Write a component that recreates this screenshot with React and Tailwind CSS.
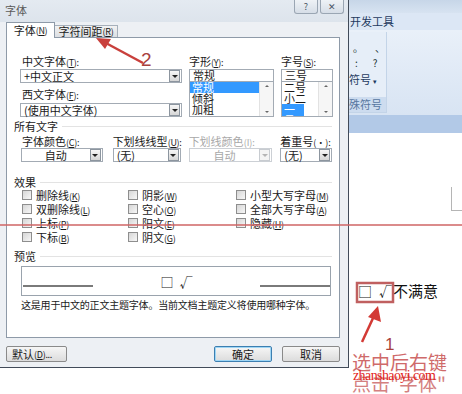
import React from 'react';

const K = ({ k, tail = '' }) => (
  <span className="text-[9px] tracking-[-0.3px]">
    (<u>{k}</u>){tail}
  </span>
);

const DropBtn = ({ disabled }) => (
  <span
    className={`mr-[1px] flex h-[12px] w-[11px] shrink-0 items-center justify-center border ${
      disabled ? 'border-[#c8ccd1] bg-[#f4f4f4]' : 'border-[#8c959f] bg-linear-to-b from-[#f7f7f7] to-[#d6d6d6]'
    }`}
  >
    <span className={`h-0 w-0 border-x-[3px] border-t-[3px] border-x-transparent ${disabled ? 'border-t-[#b5b5b5]' : 'border-t-[#222]'}`} />
  </span>
);

const Combo = ({ text, center, disabled }) => (
  <div className={`flex h-[14px] items-center border bg-white ${disabled ? 'border-[#ccd0d5]' : 'border-[#a3abb4]'}`}>
    <span className={`flex-1 whitespace-nowrap px-[3px] leading-none ${center ? 'text-center' : ''} ${disabled ? 'text-[#a8a8a8]' : 'text-[#1a1a1a]'}`}>
      {text}
    </span>
    <DropBtn disabled={disabled} />
  </div>
);

const Scroll = () => (
  <div className="flex w-[14px] flex-col items-center justify-between border-l border-[#e2e2e2] bg-[#f6f6f6] py-[3px]">
    <span className="h-0 w-0 border-x-[2px] border-b-[2px] border-x-transparent border-b-[#666]" />
    <span className="h-0 w-0 border-x-[2px] border-t-[2px] border-x-transparent border-t-[#666]" />
  </div>
);

const ListPicker = ({ value, items, selected, selectedAtBottom }) => (
  <div className="flex flex-col">
    <div className="flex h-[13px] items-center border border-[#a3abb4] bg-white px-[3px] leading-none">{value}</div>
    <div className="flex h-[35px] border border-t-0 border-[#a3abb4] bg-white">
      <div className="flex flex-1 flex-col overflow-hidden leading-[11px]">
        {items.map((it) => (
          <span key={it} className={`px-[2px] ${it === selected ? 'bg-[#3399ff] text-white' : ''}`}>
            {it}
          </span>
        ))}
        {selectedAtBottom && <span className="mr-[14px] bg-[#3399ff] px-[2px] text-white">一号</span>}
      </div>
      <Scroll />
    </div>
  </div>
);

const Header = ({ children }) => (
  <div className="flex h-[12px] items-center gap-[4px] leading-none text-[#1a1a1a]">
    <span>{children}</span>
    <span className="h-px flex-1 bg-[#e3e3e3]" />
  </div>
);

const Check = ({ label, k }) => (
  <div className="flex h-[14px] items-center gap-[4px] whitespace-nowrap leading-none">
    <span className="h-[10px] w-[10px] shrink-0 border border-[#8e8e8e] bg-linear-to-br from-[#d6d6d6] to-[#f7f7f7]" />
    <span>
      {label}
      <K k={k} />
    </span>
  </div>
);

const Btn = ({ children, active, className }) => (
  <div
    className={`flex h-[16px] items-center justify-center rounded-[2px] border bg-linear-to-b from-[#f6f6f6] to-[#dcdcdc] leading-none ${
      active ? 'border-[#3c7fb1] shadow-[inset_0_0_0_1px_#9fd6f5]' : 'border-[#8a8a8a]'
    } ${className}`}
  >
    {children}
  </div>
);

const Dialog = () => (
  <div className="flex h-[368px] flex-col border-r border-b border-[#414b59] bg-[#edf0f4]">
    <div className="flex h-[22px] items-start justify-between bg-linear-to-b from-[#e4eaf1] to-[#dde4ec]">
      <span className="pl-[5px] pt-[2px] text-[#5a5a5a]">字体</span>
      <div className="mr-[4px] flex gap-[2px]">
        <span className="flex h-[14px] w-[24px] items-center justify-center rounded-b-[3px] border border-t-0 border-[#9aa6b3] bg-linear-to-b from-[#eef2f6] to-[#d6dee7] text-[9px] leading-none text-[#4a5563]">
          ?
        </span>
        <span className="flex h-[14px] w-[24px] items-center justify-center rounded-b-[3px] border border-t-0 border-[#9aa6b3] bg-linear-to-b from-[#eef2f6] to-[#d6dee7] text-[9px] leading-none text-[#4a5563]">
          ✕
        </span>
      </div>
    </div>

    <div className="flex flex-1 flex-col pl-[6px] pr-[8px]">
      <div className="flex h-[15px] items-end">
        <div className="relative z-10 -mb-px flex h-[16px] w-[49px] items-center justify-center whitespace-nowrap border border-b-0 border-[#8e9aa8] bg-white leading-none">
          字体<K k="N" />
        </div>
        <div className="flex h-[12px] w-[63px] items-center justify-center whitespace-nowrap border border-b-0 border-l-0 border-[#a6b0bb] bg-linear-to-b from-[#f2f2f2] to-[#dcdfe3] leading-none">
          字符间距<K k="R" />
        </div>
      </div>

      <div className="flex h-[301px] flex-col border border-[#8e9aa8] bg-white px-[7px] pt-[18px]">
        <div className="ml-[6px] grid grid-cols-[162px_85px_52px] gap-x-[7px]">
          <div className="flex flex-col">
            <span className="h-[13px] whitespace-nowrap pl-[2px] leading-none">
              中文字体<K k="T" tail=":" />
            </span>
            <Combo text="+中文正文" />
            <span className="mt-[6px] h-[14px] whitespace-nowrap pl-[2px] leading-none">
              西文字体<K k="F" tail=":" />
            </span>
            <Combo text="(使用中文字体)" />
          </div>
          <div className="flex flex-col">
            <span className="h-[13px] whitespace-nowrap leading-none">
              字形<K k="Y" tail=":" />
            </span>
            <ListPicker value="常规" items={['常规', '倾斜', '加粗']} selected="常规" />
          </div>
          <div className="flex flex-col">
            <span className="h-[13px] whitespace-nowrap leading-none">
              字号<K k="S" tail=":" />
            </span>
            <ListPicker value="三号" items={['二号', '小二']} selectedAtBottom />
          </div>
        </div>

        <div className="mt-[3px]">
          <Header>所有文字</Header>
        </div>
        <div className="mt-[4px] ml-[7px] flex">
          <div className="flex w-[82px] flex-col">
            <span className="h-[12px] whitespace-nowrap pl-[1px] leading-none">
              字体颜色<K k="C" tail=":" />
            </span>
            <Combo text="自动" center />
          </div>
          <div className="ml-[10px] flex w-[68px] flex-col">
            <span className="h-[12px] whitespace-nowrap leading-none">
              下划线线型<K k="U" tail=":" />
            </span>
            <Combo text="(无)" />
          </div>
          <div className="ml-[8px] flex w-[84px] flex-col">
            <span className="h-[12px] whitespace-nowrap leading-none text-[#a8a8a8]">
              下划线颜色<span className="text-[9px]">(I):</span>
            </span>
            <Combo text="自动" center disabled />
          </div>
          <div className="ml-[8px] flex w-[52px] flex-col">
            <span className="h-[12px] whitespace-nowrap leading-none">
              着重号<span className="text-[9px]">(·):</span>
            </span>
            <Combo text="(无)" />
          </div>
        </div>

        <div className="mt-[14px]">
          <Header>效果</Header>
        </div>
        <div className="ml-[8px] grid grid-cols-[106px_108px_1fr]">
          <div className="flex flex-col">
            <Check label="删除线" k="K" />
            <Check label="双删除线" k="L" />
            <Check label="上标" k="P" />
            <Check label="下标" k="B" />
          </div>
          <div className="flex flex-col">
            <Check label="阴影" k="W" />
            <Check label="空心" k="O" />
            <Check label="阳文" k="E" />
            <Check label="阴文" k="G" />
          </div>
          <div className="flex flex-col">
            <Check label="小型大写字母" k="M" />
            <Check label="全部大写字母" k="A" />
            <Check label="隐藏" k="H" />
          </div>
        </div>

        <div className="mt-[6px]">
          <Header>预览</Header>
        </div>
        <div className="mt-[4px] ml-[7px] mr-[1px] flex h-[30px] items-end justify-between border border-[#9aa3ad] bg-white">
          <span className="mb-[8px] ml-[1px] h-[2px] w-[70px] bg-[#7a7a7a]" />
          <span className="mb-[7px] flex gap-[6px] text-[13px] leading-none text-[#222]">
            <span>□</span>
            <span>√</span>
          </span>
          <span className="mb-[8px] h-[2px] w-[70px] bg-[#7a7a7a]" />
        </div>
        <div className="mt-[4px] ml-[7px] whitespace-nowrap text-[10px] leading-none tracking-[-0.2px] text-[#1a1a1a]">
          这是用于中文的正文主题字体。当前文档主题定义将使用哪种字体。
        </div>
      </div>

      <div className="mt-[8px] flex items-center justify-between">
        <Btn className="w-[61px] justify-start whitespace-nowrap pl-[5px]">
          默认<K k="D" tail="..." />
        </Btn>
        <div className="flex gap-[10px]">
          <Btn active className="w-[58px]">确定</Btn>
          <Btn className="w-[58px]">取消</Btn>
        </div>
      </div>
    </div>
  </div>
);

const WordArea = () => (
  <div className="flex h-[394px] flex-1 flex-col overflow-hidden">
    <div className="h-[13px] bg-linear-to-b from-[#c7d6e8] to-[#d7e3f1]" />
    <div className="flex h-[17px] items-center bg-[#dce7f5] pl-[1px] text-[11px] leading-none text-[#1e3a5f]">开发工具</div>
    <div className="flex h-[85px] items-start bg-linear-to-b from-[#e9f0f9] to-[#d8e4f3] pt-[2px]">
      <div className="flex h-[81px] w-[38px] flex-col border-r border-b border-[#c3d4e8] bg-[#e6eef8]">
        <div className="flex flex-1 flex-col pl-[4px] pt-[8px] text-[10px] leading-[15px] text-[#233]">
          <div className="flex gap-[12px]">
            <span>。</span>
            <span>、</span>
          </div>
          <div className="flex gap-[15px] pl-[2px]">
            <span>:</span>
            <span>?</span>
          </div>
          <div className="-ml-[4px] mt-[2px] text-[11px] text-[#1e3a5f]">
            符号 <span className="text-[7px]">▾</span>
          </div>
        </div>
        <div className="flex h-[15px] items-center bg-[#cddcef] text-[11px] leading-none text-[#5877a0]">殊符号</div>
      </div>
    </div>
    <div className="h-[18px] bg-[#b2c9e7]" />
    <div className="relative flex-1 bg-white pl-[9px] pt-[150px]">
      <div className="flex items-center text-[15px] leading-none text-[#111]">
        <span className="w-[21px] text-[14px]">□</span>
        <span className="w-[14px] text-[13px]">√</span>
        <span>不满意</span>
      </div>
      <span className="absolute left-[102px] top-[54px] h-[24px] w-px bg-[#b5b5b5]" />
      <span className="absolute left-[102px] top-[77px] h-px w-[20px] bg-[#b5b5b5]" />
    </div>
  </div>
);

export default function App() {
  return (
    <div className="relative h-[394px] w-[462px] overflow-hidden bg-white font-['Noto_Sans_CJK_SC',sans-serif] text-[11px] text-[#1a1a1a]">
      <div className="flex">
        <div className="w-[349px]">
          <Dialog />
        </div>
        <WordArea />
      </div>

      {/* annotations drawn over the screenshot */}
      <svg className="pointer-events-none absolute inset-0" width="462" height="394" viewBox="0 0 462 394">
        <line x1="0" y1="225" x2="462" y2="225" stroke="#cf6464" strokeWidth="1.5" />
        <line x1="143" y1="63" x2="104" y2="42" stroke="#c9403c" strokeWidth="2.5" />
        <polygon points="96,38 111,39 105,49" fill="#c9403c" />
        <rect x="357" y="283" width="36" height="19" fill="none" stroke="#c06060" strokeWidth="2.5" />
        <line x1="362" y1="342" x2="374" y2="316" stroke="#d33a35" strokeWidth="2.5" />
        <polygon points="378,306 381,322 368,317" fill="#d33a35" />
      </svg>
      <span className="absolute left-[141px] top-[50px] font-['Liberation_Sans',sans-serif] text-[19px] leading-none text-[#a8413d]">2</span>
      <span className="absolute left-[385px] top-[336px] font-['Liberation_Sans',sans-serif] text-[17px] leading-none text-[#a8413d]">1</span>
      <span className="absolute left-[352px] top-[352px] text-[19px] leading-none text-[#cf6a6a]">选中后右键</span>
      <span className="absolute left-[352px] top-[373px] text-[19px] leading-none text-[#d48080]">点击"字体"</span>
      <span className="absolute left-[353px] top-[369px] font-['Liberation_Serif',serif] text-[14px] leading-none tracking-[-0.6px] text-[#e3241c]">zhanshaoyi.com</span>
    </div>
  );
}
